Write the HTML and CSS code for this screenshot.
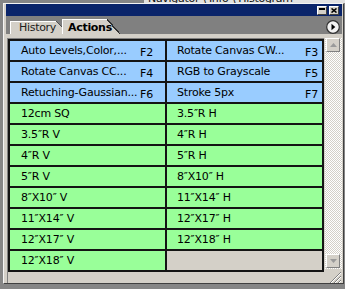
FILE: index.html
```html
<!DOCTYPE html>
<html>
<head>
<meta charset="utf-8">
<link rel="stylesheet" href="styles.css">
</head>
<body>
<div class="bg-strip"><div class="behind"><span>Navigator \ Info \ Histogram</span></div></div>
<div class="window">
  <div class="titlebar">
    <span class="tbtn min"><i></i></span>
    <span class="tbtn close"><svg width="6" height="5" viewBox="0 0 6 5"><path d="M0.5 0.5L5.5 4.5M5.5 0.5L0.5 4.5" stroke="#000" stroke-width="1.6"/></svg></span>
  </div>
  <div class="tabstrip">
    <div class="tab history">History</div>
    <div class="tab actions">Actions</div>
    <div class="tabfill"></div>
    <div class="menu-btn"><svg width="14" height="14" viewBox="0 0 14 14"><circle cx="7" cy="7" r="6.3" fill="#f2f2f2" stroke="#303030" stroke-width="1.2"/><path d="M5.5 3.8L9.3 7L5.5 10.2Z" fill="#000"/></svg></div>
  </div>
  <div class="panel">
    <div class="listcol">
      <div class="grid">
        <div class="cell blue"><span>Auto Levels,Color,...</span><span class="key">F2</span></div>
        <div class="cell blue r"><span>Rotate Canvas CW...</span><span class="key">F3</span></div>
        <div class="cell blue"><span>Rotate Canvas CC...</span><span class="key">F4</span></div>
        <div class="cell blue r"><span>RGB to Grayscale</span><span class="key">F5</span></div>
        <div class="cell blue"><span>Retuching-Gaussian...</span><span class="key">F6</span></div>
        <div class="cell blue r"><span>Stroke 5px</span><span class="key">F7</span></div>
        <div class="cell green"><span>12cm SQ</span></div>
        <div class="cell green r"><span>3.5″R H</span></div>
        <div class="cell green"><span>3.5″R V</span></div>
        <div class="cell green r"><span>4″R H</span></div>
        <div class="cell green"><span>4″R V</span></div>
        <div class="cell green r"><span>5″R H</span></div>
        <div class="cell green"><span>5″R V</span></div>
        <div class="cell green r"><span>8″X10″ H</span></div>
        <div class="cell green"><span>8″X10″ V</span></div>
        <div class="cell green r"><span>11″X14″ H</span></div>
        <div class="cell green"><span>11″X14″ V</span></div>
        <div class="cell green r"><span>12″X17″ H</span></div>
        <div class="cell green"><span>12″X17″ V</span></div>
        <div class="cell green r"><span>12″X18″ H</span></div>
        <div class="cell green"><span>12″X18″ V</span></div>
        <div class="cell empty"></div>
      </div>
    </div>
    <div class="sidecol">
      <div class="scrollbar">
        <div class="sb-btn"><svg width="7" height="4" viewBox="0 0 7 4"><path d="M0 4L3.5 0L7 4Z" fill="#9a9a9a"/></svg></div>
        <div class="sb-track"></div>
        <div class="sb-btn down"><svg width="7" height="4" viewBox="0 0 7 4"><path d="M0 0L3.5 4L7 0Z" fill="#9a9a9a"/></svg></div>
      </div>
      <div class="grip"><svg width="17" height="14" viewBox="0 0 17 14"><path d="M16 3L5 14M16 7L9 14M16 11L13 14" stroke="#808080" stroke-width="1"/><path d="M16 4L6 14M16 8L10 14M16 12L14 14" stroke="#ffffff" stroke-width="1"/></svg></div>
    </div>
  </div>
</div>
</body>
</html>
```
FILE: styles.css
```css
body {
  margin: 0;
  width: 345px;
  height: 289px;
  overflow: hidden;
  background: #868686;
  font-family: "DejaVu Sans", Verdana, sans-serif;
}

.bg-strip {
  height: 3px;
  display: flex;
  overflow: hidden;
}

.behind {
  margin-left: 144px;
  flex: 1;
  background: #e2e2e2;
  display: flex;
  align-items: flex-end;
  overflow: hidden;
  padding-left: 4px;
}

.behind span {
  font-size: 11px;
  line-height: 11px;
  margin-bottom: -1px;
  white-space: nowrap;
  color: #111;
  letter-spacing: -0.3px;
}

.window {
  margin-left: 3px;
  width: 341px;
  height: 281px;
  box-sizing: border-box;
  border: 1px solid;
  border-color: #f4f4f4 #404040 #404040 #f4f4f4;
  padding: 0 1px 0 2px;
  background: #d4d0c8;
  display: flex;
  flex-direction: column;
}

.titlebar {
  height: 12px;
  flex: none;
  background: #0a246a;
  display: flex;
  justify-content: flex-end;
  align-items: center;
  gap: 2px;
  padding-right: 3px;
}

.tbtn {
  width: 10px;
  height: 9px;
  margin-top: 1px;
  box-sizing: border-box;
  background: #d4d0c8;
  border: 1px solid;
  border-color: #ffffff #404040 #404040 #ffffff;
  display: flex;
  align-items: center;
  justify-content: center;
}

.tbtn.min {
  align-items: flex-start;
}

.tbtn.min i {
  display: block;
  width: 6px;
  height: 2px;
  margin-top: 1px;
  background: #000;
}

.tabstrip {
  height: 18px;
  flex: none;
  background: #808080;
  display: flex;
  align-items: flex-end;
  padding-left: 4px;
}

.tab {
  font-size: 11px;
  color: #000;
  box-sizing: border-box;
  white-space: nowrap;
  letter-spacing: -0.3px;
}

.history {
  width: 52px;
  height: 13px;
  padding: 1px 0 0 9px;
  line-height: 12px;
  color: #202020;
  background:
    linear-gradient(#ffffff, #ffffff) left top / calc(100% - 6px) 1px no-repeat,
    linear-gradient(#ffffff, #ffffff) left top / 1px 100% no-repeat,
    linear-gradient(to top right, #d4d0c8 calc(50% - 0.6px), #505050 calc(50% - 0.6px), #505050 calc(50% + 0.6px), #808080 calc(50% + 0.6px)) right top / 6px 6px no-repeat,
    #d4d0c8;
}

.actions {
  width: 58px;
  height: 15px;
  padding: 2px 0 0 6px;
  line-height: 13px;
  font-weight: bold;
  background:
    linear-gradient(#ffffff, #ffffff) left top / calc(100% - 13px) 1px no-repeat,
    linear-gradient(#ffffff, #ffffff) left top / 1px 100% no-repeat,
    linear-gradient(to top right, #d4d0c8 calc(50% - 0.8px), #303030 calc(50% - 0.8px), #303030 calc(50% + 0.6px), transparent calc(50% + 0.6px)) right top / 13px 100% no-repeat,
    linear-gradient(#d4d0c8, #d4d0c8) left top / calc(100% - 13px) 100% no-repeat;
}

.tabfill {
  flex: 1;
}

.menu-btn {
  width: 14px;
  height: 14px;
  align-self: flex-start;
  margin-top: 4px;
  margin-right: 2px;
}

.menu-btn svg {
  display: block;
}

.panel {
  flex: 1;
  display: flex;
  padding: 4px 0 0 1px;
  min-height: 0;
}

.listcol {
  border-left: 1px solid #808080;
  border-top: 1px solid #808080;
  align-self: stretch;
}

.grid {
  width: 316px;
  box-sizing: border-box;
  display: grid;
  grid-template-columns: 1fr 1fr;
  grid-auto-rows: 19px;
  gap: 2px;
  padding: 2px;
  background: #141414;
}

.cell {
  display: flex;
  justify-content: space-between;
  align-items: center;
  padding: 0 12px 0 11px;
  font-size: 11px;
  letter-spacing: -0.2px;
  color: #000;
  white-space: nowrap;
  overflow: hidden;
}

.cell span:first-child {
  margin-bottom: 1px;
}

.cell.r {
  padding: 0 4px 0 10px;
}

.blue {
  background: #99ccff;
}

.green {
  background: #99ff99;
}

.empty {
  background: #d4d0c8;
}

.key {
  margin-top: 3px;
}

.sidecol {
  margin-left: 1px;
  width: 17px;
  display: flex;
  flex-direction: column;
}

.scrollbar {
  height: 231px;
  display: flex;
  flex-direction: column;
  background: repeating-conic-gradient(#d4d0c8 0 25%, #ffffff 0 50%) 0 0 / 2px 2px;
}

.sb-btn {
  width: 14px;
  height: 14px;
  margin-left: 1px;
  box-sizing: border-box;
  background: #d4d0c8;
  border: 1px solid;
  border-color: #ffffff #808080 #808080 #ffffff;
  display: flex;
  align-items: center;
  justify-content: center;
}

.sb-btn.down {
  margin-bottom: 1px;
}

.sb-track {
  flex: 1;
}

.grip {
  flex: 1;
  background: #d4d0c8;
  display: flex;
  align-items: flex-end;
}

.grip svg {
  display: block;
}
```
